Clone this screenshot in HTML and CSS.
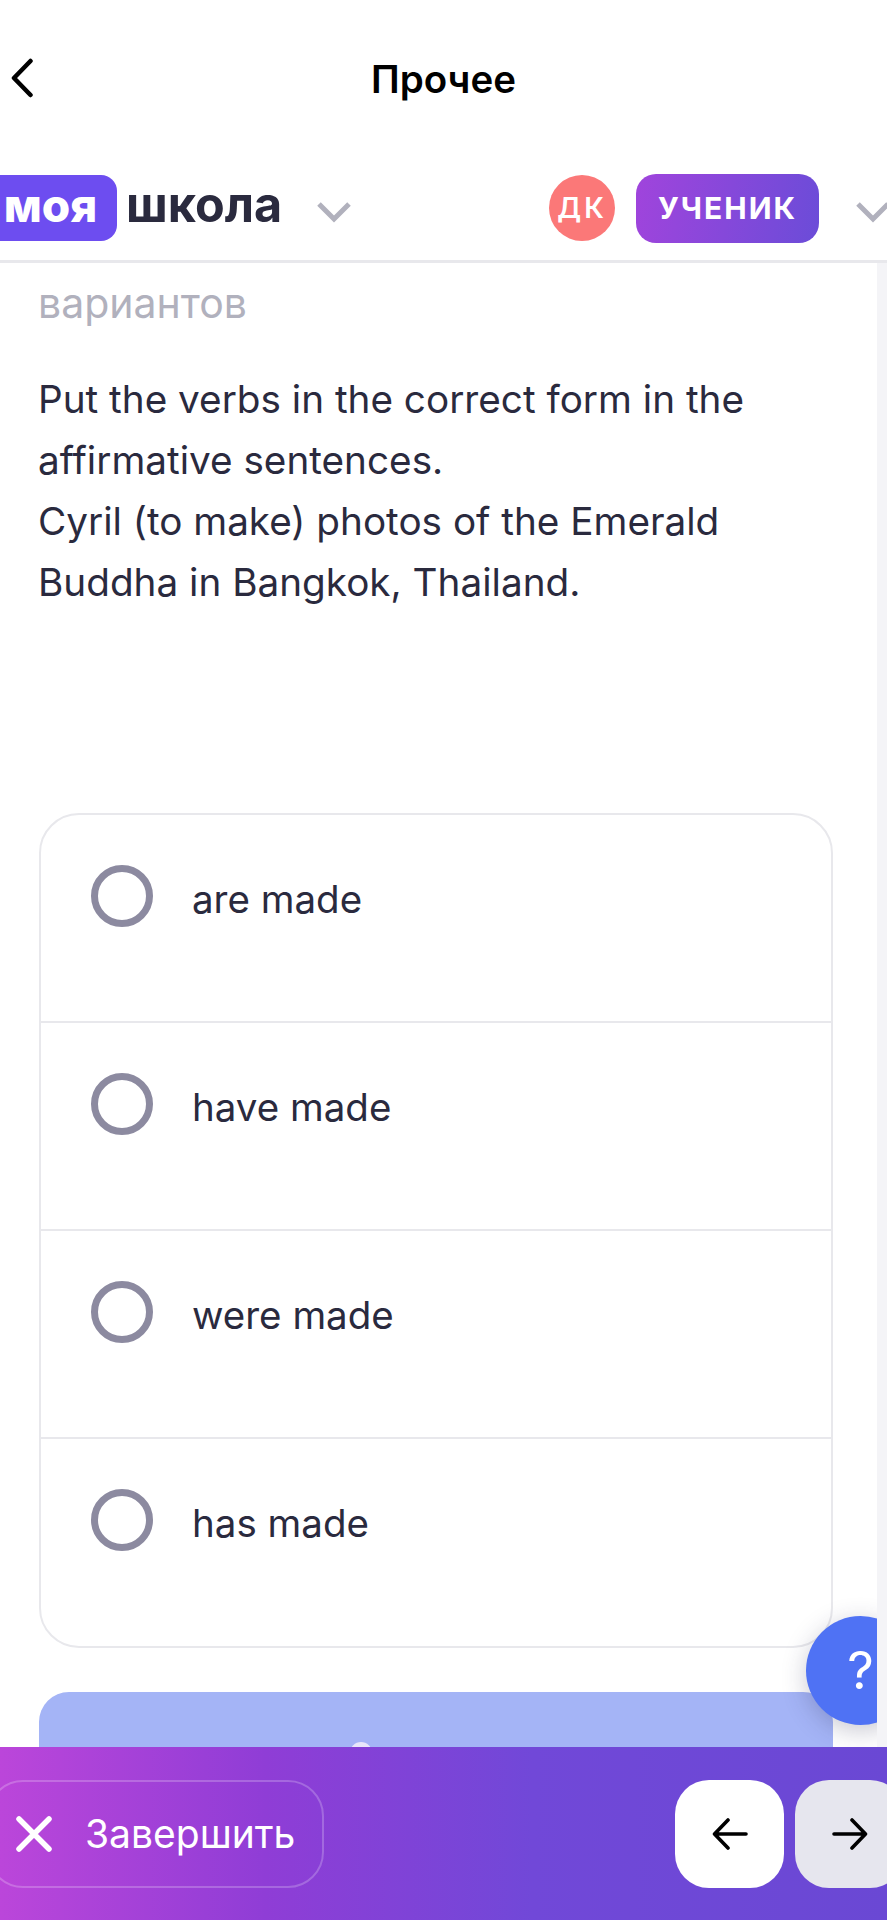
FILE: index.html
```html
<!DOCTYPE html>
<html lang="ru">
<head>
<meta charset="utf-8">
<title>Прочее</title>
<link rel="stylesheet" href="styles.css">
</head>
<body>
<div class="app">
  <div class="titlebar">
    <svg class="back" width="24" height="40" viewBox="0 0 24 40"><path d="M20.5 3 L4 20 L20.5 37" fill="none" stroke="#000" stroke-width="4.5" stroke-linecap="round" stroke-linejoin="round"/></svg>
    <div class="title">Прочее</div>
  </div>
  <header class="topnav">
    <div class="logo"><span class="logo-pill">моя</span><span class="logo-word">школа</span></div>
    <svg class="chev" width="36" height="22" viewBox="0 0 36 22"><path d="M3 3 L18 18 L33 3" fill="none" stroke="#b1b1bd" stroke-width="5"/></svg>
    <div class="avatar">ДК</div>
    <div class="role">УЧЕНИК</div>
    <svg class="chev chev-right" width="36" height="22" viewBox="0 0 36 22"><path d="M3 3 L18 18 L33 3" fill="none" stroke="#b1b1bd" stroke-width="5"/></svg>
  </header>
  <main class="content">
    <div class="hint">вариантов</div>
    <p class="question">Put the verbs in the correct form in the<br>affirmative sentences.<br>Cyril (to make) photos of the Emerald<br>Buddha in Bangkok, Thailand.</p>
    <div class="options">
      <div class="option"><span class="radio"></span><span class="label">are made</span></div>
      <div class="option"><span class="radio"></span><span class="label">have made</span></div>
      <div class="option"><span class="radio"></span><span class="label">were made</span></div>
      <div class="option"><span class="radio"></span><span class="label">has made</span></div>
    </div>
    <div class="submit"><span class="spinner"></span></div>
    <div class="help">?</div>
  </main>
  <footer class="bottom">
    <div class="finish">
      <svg class="x" width="38" height="38" viewBox="0 0 38 38"><path d="M4 4 L34 34 M34 4 L4 34" fill="none" stroke="#fff" stroke-width="5.5" stroke-linecap="round"/></svg>
      <span>Завершить</span>
    </div>
    <div class="navs">
      <div class="nav nav-prev"><svg width="36" height="32" viewBox="0 0 36 32"><path d="M34 16 H3 M16 2 L2.5 16 L16 30" fill="none" stroke="#000" stroke-width="3.6" stroke-linecap="round" stroke-linejoin="round"/></svg></div>
      <div class="nav nav-next"><svg width="36" height="32" viewBox="0 0 36 32"><path d="M2 16 H33 M20 2 L33.5 16 L20 30" fill="none" stroke="#000" stroke-width="3.6" stroke-linecap="round" stroke-linejoin="round"/></svg></div>
    </div>
  </footer>
</div>
</body>
</html>
```
FILE: styles.css
```css
* { box-sizing: border-box; }
html, body { margin: 0; padding: 0; background: #fff; }
.app {
  width: 887px; height: 1920px; overflow: hidden;
  display: flex; flex-direction: column;
  font-family: Inter, "Liberation Sans", sans-serif; color: #2a2a3e;
}
.titlebar { height: 130px; flex: none; display: flex; align-items: center; justify-content: center; position: relative; padding-top: 28px; }
.back { position: absolute; left: 10px; top: 58px; }
.title { font-size: 38.5px; font-weight: 600; color: #000; line-height: 44px; }
.topnav {
  height: 133px; flex: none; display: flex; align-items: center;
  border-bottom: 3px solid #e8e8ec; padding-top: 26px;
}
.logo { display: flex; align-items: center; margin-left: -12px; flex: none; }
.logo-pill {
  width: 129px; height: 66px; border-radius: 0 16px 16px 0; background: #6d4df0; padding-bottom: 7px; padding-right: 4px;
  color: #fff; font-size: 46px; font-weight: 800; display: flex; align-items: center; justify-content: center;
}
.logo-word { font-size: 48.5px; font-weight: 700; color: #2a2a3e; margin-left: 9px; line-height: 66px; padding-bottom: 7px; }
.chev { flex: none; margin-left: 34px; margin-top: 8px; }
.avatar {
  width: 66px; height: 66px; border-radius: 50%; background: #fb7878; color: #fff;
  font-size: 28px; font-weight: 600; letter-spacing: 3px; display: flex; align-items: center; justify-content: center;
  margin-left: 197px; flex: none;
}
.role {
  width: 183px; height: 69px; border-radius: 20px; color: #fff; flex: none;
  background: linear-gradient(100deg, #a044dc, #6b4cd8);
  font-size: 30px; font-weight: 700; letter-spacing: 2px; display: flex; align-items: center; justify-content: center;
  margin-left: 21px;
}
.chev-right { margin-left: 36px; }
.content { flex: 1; position: relative; padding: 14px 54px 0 39px; overflow: hidden; border-right: 10px solid #f4f4f7; min-height: 0; }
.hint { font-size: 41px; line-height: 52px; color: #b1b1bd; margin-left: -1px; }
.question { margin: 40px 0 0 -1px; font-size: 38.7px; line-height: 61px; color: #2a2a3e; width: 790px; }
.options { margin-top: 200px; width: 794px; height: 835px; border: 2px solid #e8e8ec; border-radius: 40px; background: #fff; }
.option { height: 208px; display: flex; align-items: flex-start; padding: 50px 0 0 50px; border-bottom: 2px solid #e8e8ec; }
.option:last-child { border-bottom: 0; }
.radio { width: 62px; height: 62px; border-radius: 50%; border: 7px solid #8c8aa0; flex: none; }
.label { font-size: 38.5px; line-height: 44px; margin-left: 39px; margin-top: 12px; color: #2a2a3e; }
.submit { margin-top: 44px; width: 794px; height: 120px; background: #a4b4f6; border-radius: 30px; position: relative; }
.spinner { position: absolute; left: 311px; top: 50px; width: 22px; height: 22px; border-radius: 50%; background: #e8e6fa; }
.help {
  position: absolute; left: 806px; top: 1353px; width: 109px; height: 109px; border-radius: 50%;
  background: #4f72f4; color: #fff; font-size: 52px; font-weight: 400; display: flex; align-items: center; justify-content: center;
  box-shadow: 0 6px 24px rgba(40,40,80,.25);
}
.bottom {
  height: 173px; flex: none; display: flex; align-items: center; justify-content: space-between;
  background: linear-gradient(90deg, #bb46da 0%, #8f3dd6 30%, #7148d8 60%, #6a48d4 100%);
}
.finish {
  width: 337px; height: 108px; margin-left: -13px; border: 2px solid rgba(255,255,255,.22); border-radius: 36px;
  display: flex; align-items: center; color: #fff; font-size: 39px; padding-left: 26px; gap: 32px; flex: none;
}
.navs { display: flex; gap: 11px; margin-right: -17px; flex: none; }
.nav { width: 109px; height: 108px; border-radius: 34px; display: flex; align-items: center; justify-content: center; }
.nav-prev { background: #fff; }
.nav-next { background: #e6e6ee; }
```
